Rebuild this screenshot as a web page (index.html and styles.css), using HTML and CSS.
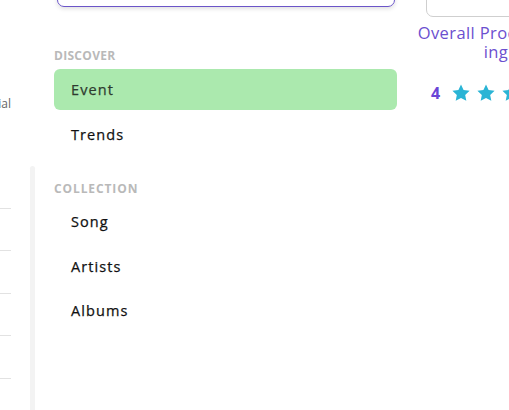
FILE: index.html
```html
<!DOCTYPE html>
<html>
<head>
<meta charset="utf-8">
<link rel="stylesheet" href="styles.css">
</head>
<body>
<div class="page">
  <div class="leftcol">
    <div class="leftinner">
      <div class="partial">Potential</div>
      <div class="rows">
        <div class="row"></div>
        <div class="row"></div>
        <div class="row"></div>
        <div class="row"></div>
        <div class="row"></div>
      </div>
    </div>
    <div class="divider"></div>
  </div>
  <nav class="sidebar">
    <div class="search"></div>
    <div class="label first">DISCOVER</div>
    <div class="item active">Event</div>
    <div class="item">Trends</div>
    <div class="label second">COLLECTION</div>
    <div class="item">Song</div>
    <div class="item">Artists</div>
    <div class="item">Albums</div>
  </nav>
  <div class="rightcol">
    <div class="topbox"></div>
    <div class="overall">Overall Product Rat<br>ing</div>
    <div class="rating">
      <span class="num">4</span>
      <svg class="star" viewBox="0 0 24 24"><path d="M12 1.8l3.1 6.6 7.2.9-5.3 5 1.4 7.1L12 17.9l-6.4 3.5 1.4-7.1-5.3-5 7.2-.9z"/></svg>
      <svg class="star" viewBox="0 0 24 24"><path d="M12 1.8l3.1 6.6 7.2.9-5.3 5 1.4 7.1L12 17.9l-6.4 3.5 1.4-7.1-5.3-5 7.2-.9z"/></svg>
      <svg class="star" viewBox="0 0 24 24"><path d="M12 1.8l3.1 6.6 7.2.9-5.3 5 1.4 7.1L12 17.9l-6.4 3.5 1.4-7.1-5.3-5 7.2-.9z"/></svg>
    </div>
  </div>
</div>
</body>
</html>
```

FILE: styles.css
```css
html, body {
  margin: 0;
  padding: 0;
  background: #fff;
  overflow: hidden;
}
body {
  width: 509px;
  height: 410px;
  font-family: "Open Sans", "DejaVu Sans", sans-serif;
}
.page {
  display: grid;
  grid-template-columns: 36px 343px 112px;
  column-gap: 18px;
  width: 509px;
  height: 410px;
  overflow: hidden;
}
.leftcol {
  display: flex;
  gap: 19px;
  height: 410px;
}
.leftinner {
  width: 11px;
  overflow: hidden;
  flex: none;
}
.partial {
  direction: rtl;
  white-space: nowrap;
  font-size: 12px;
  color: #666;
  margin-top: 96px;
  line-height: 16px;
}
.rows {
  margin-top: 54px;
}
.row {
  height: 42.5px;
  border-bottom: 1px solid #e2e2e2;
  box-sizing: border-box;
}
.divider {
  width: 5px;
  flex: none;
  margin-top: 166px;
  background: #f3f3f3;
  border-radius: 3px 3px 0 0;
}
.sidebar {
  display: flex;
  flex-direction: column;
}
.search {
  height: 40px;
  margin: -33px 2px 0 3px;
  border: 1px solid #6b55c8;
  border-radius: 7px;
  box-shadow: 0 2px 4px rgba(0,0,0,0.12);
  box-sizing: border-box;
}
.label {
  font-size: 12px;
  font-weight: 700;
  color: #b9b9b9;
  line-height: 14px;
  letter-spacing: 0.3px;
}
.label.first { margin-top: 42px; margin-bottom: 6px; }
.label.second { margin-top: 24px; margin-bottom: 5px; letter-spacing: 0.9px; }
.item {
  height: 41px;
  margin-bottom: 3.5px;
  padding-left: 17px;
  display: flex;
  align-items: center;
  font-size: 14.5px;
  font-weight: 500;
  color: #111;
  border-radius: 6px;
  letter-spacing: 1.1px;
  -webkit-text-stroke: 0.25px currentColor;
}
.item.active {
  background: #abe9ae;
  color: #2e3a2f;
}
.rightcol {
  display: flex;
  flex-direction: column;
  margin-left: 3px;
}
.topbox {
  height: 40px;
  margin: -23px 0 0 8px;
  width: 140px;
  border: 1px solid #cfcfcf;
  border-radius: 7px;
  box-sizing: border-box;
  flex: none;
}
.overall {
  width: 166px;
  margin-left: -5px;
  margin-top: 6px;
  text-align: center;
  font-size: 16.5px;
  line-height: 19px;
  letter-spacing: 0.4px;
  color: #6b4fcf;
}
.rating {
  display: flex;
  align-items: center;
  margin-top: 21px;
  margin-left: 13px;
  gap: 5px;
}
.num {
  font-weight: bold;
  font-size: 16px;
  color: #6a45d6;
  width: 15px;
}
.star {
  width: 20px;
  height: 20px;
  fill: #2ab4d5;
  flex: none;
}
```
